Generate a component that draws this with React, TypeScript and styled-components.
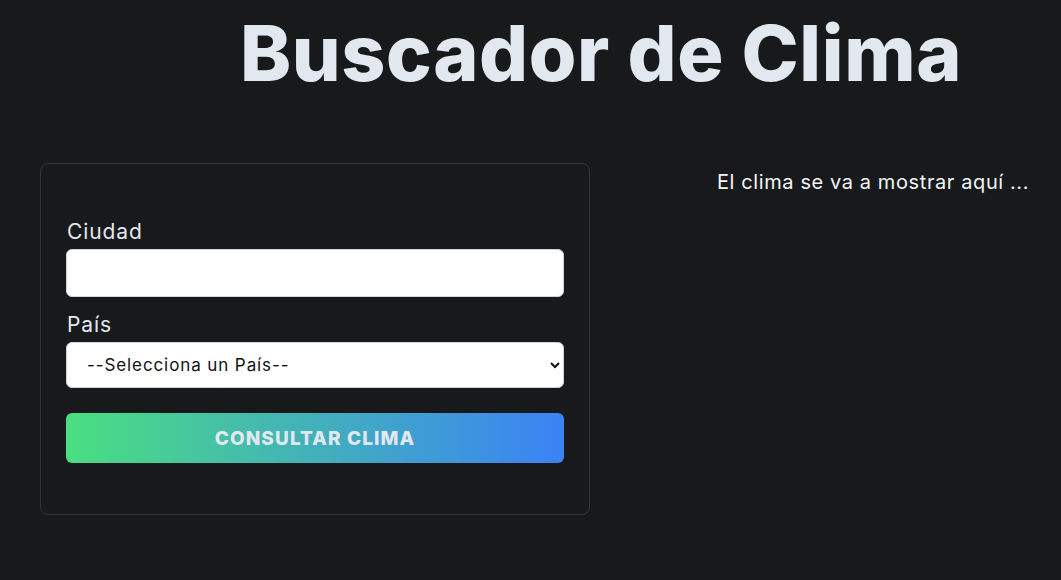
import React from "react";
import styled, { createGlobalStyle } from "styled-components";

const Global = createGlobalStyle`
  html, body { margin: 0; padding: 0; background: #18191b; }
  body { font-family: Inter, "Noto Sans", sans-serif; color: #e2e8f0; }
  * { box-sizing: border-box; }
`;

const Page = styled.div`
  width: 1061px;
  height: 580px;
  overflow: hidden;
  background: #18191b;
`;

const Title = styled.h1`
  margin: 0;
  padding: 5px 0 0 240px;
  font-size: 77px;
  line-height: 96px;
  font-weight: 800;
  letter-spacing: 0.6px;
  color: #e2e8f0;
  white-space: nowrap;
`;

const Content = styled.div`
  display: flex;
  align-items: flex-start;
  padding: 62px 0 0 40px;
`;

const Card = styled.form`
  width: 550px;
  height: 352px;
  border: 1px solid #2e3440;
  border-radius: 8px;
  padding: 55px 25px 0 25px;
  display: flex;
  flex-direction: column;
`;

const Label = styled.label`
  font-size: 21px;
  line-height: 26px;
  letter-spacing: 0.9px;
  color: #e2e8f0;
  padding-left: 1px;
  margin-bottom: 4px;
`;

const Input = styled.input`
  width: 498px;
  height: 48px;
  border: 1px solid #cbd5e1;
  border-radius: 6px;
  background: #fff;
  margin-bottom: 15px;
`;

const Select = styled.select`
  width: 498px;
  height: 46px;
  border: 1px solid #cbd5e1;
  border-radius: 6px;
  background: #fff;
  padding: 0 16px;
  font-family: Inter, sans-serif;
  font-size: 17px;
  letter-spacing: 0.9px;
  color: #111;
  margin-bottom: 25px;
`;

const Button = styled.button`
  width: 498px;
  height: 50px;
  border: none;
  border-radius: 6px;
  background: linear-gradient(90deg, #4ade80 0%, #3b82f6 100%);
  color: #e2e8f0;
  font-family: Inter, sans-serif;
  font-weight: 800;
  font-size: 19px;
  letter-spacing: 1.1px;
  text-transform: uppercase;
`;

const Result = styled.p`
  margin: 6px 0 0 127px;
  font-size: 20px;
  line-height: 26px;
  letter-spacing: 0.6px;
  color: #f1f5f9;
  white-space: nowrap;
`;

export default function App() {
  return (
    <Page>
      <Global />
      <Title>Buscador de Clima</Title>
      <Content>
        <Card onSubmit={(e) => e.preventDefault()}>
          <Label htmlFor="ciudad">Ciudad</Label>
          <Input id="ciudad" type="text" />
          <Label htmlFor="pais">País</Label>
          <Select id="pais" defaultValue="">
            <option value="">--Selecciona un País--</option>
          </Select>
          <Button type="submit">Consultar Clima</Button>
        </Card>
        <Result>El clima se va a mostrar aquí ...</Result>
      </Content>
    </Page>
  );
}
